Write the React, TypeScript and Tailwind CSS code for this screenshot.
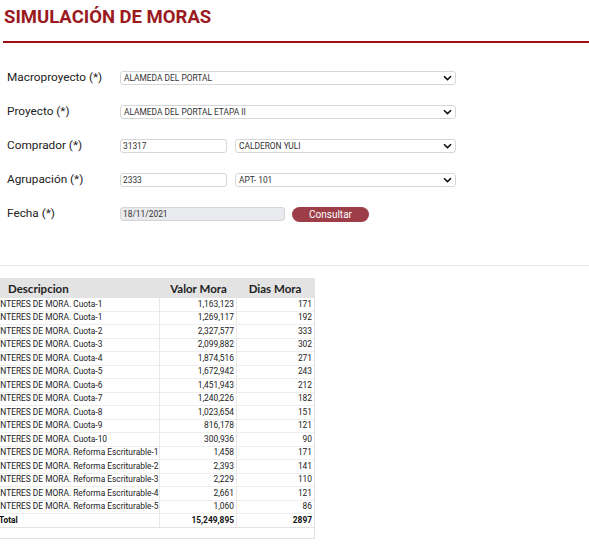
import React from "react";

const rows: [string, string, string][] = [
  ["INTERES DE MORA. Cuota-1", "1,163,123", "171"],
  ["INTERES DE MORA. Cuota-1", "1,269,117", "192"],
  ["INTERES DE MORA. Cuota-2", "2,327,577", "333"],
  ["INTERES DE MORA. Cuota-3", "2,099,882", "302"],
  ["INTERES DE MORA. Cuota-4", "1,874,516", "271"],
  ["INTERES DE MORA. Cuota-5", "1,672,942", "243"],
  ["INTERES DE MORA. Cuota-6", "1,451,943", "212"],
  ["INTERES DE MORA. Cuota-7", "1,240,226", "182"],
  ["INTERES DE MORA. Cuota-8", "1,023,654", "151"],
  ["INTERES DE MORA. Cuota-9", "816,178", "121"],
  ["INTERES DE MORA. Cuota-10", "300,936", "90"],
  ["INTERES DE MORA. Reforma Escriturable-1", "1,458", "171"],
  ["INTERES DE MORA. Reforma Escriturable-2", "2,393", "141"],
  ["INTERES DE MORA. Reforma Escriturable-3", "2,229", "110"],
  ["INTERES DE MORA. Reforma Escriturable-4", "2,661", "121"],
  ["INTERES DE MORA. Reforma Escriturable-5", "1,060", "86"],
];

function Chevron() {
  return (
    <svg width="9" height="6" viewBox="0 0 9 6" className="shrink-0">
      <path d="M1 1.2 L4.5 4.6 L8 1.2" fill="none" stroke="#111" strokeWidth="1.6" />
    </svg>
  );
}

function Select({ value, className }: { value: string; className: string }) {
  return (
    <div
      className={`flex h-[14px] items-center justify-between rounded-[3px] border border-[#d6d6d6] bg-white pl-[3px] pr-[3px] text-[8.4px] text-[#333] ${className}`}
    >
      <span>{value}</span>
      <Chevron />
    </div>
  );
}

function TextBox({ value, className }: { value: string; className: string }) {
  return (
    <div
      className={`flex h-[14px] items-center rounded-[3px] border border-[#d6d6d6] pl-[2px] text-[8.4px] text-[#333] ${className}`}
    >
      {value}
    </div>
  );
}

function FormRow({ label, children }: { label: string; children: React.ReactNode }) {
  return (
    <div className="flex h-[14px] items-center">
      <span className="w-[113px] shrink-0 text-[11.8px] text-[#222]">{label}</span>
      {children}
    </div>
  );
}

export default function App() {
  return (
    <div className="h-[558px] w-[589px] overflow-hidden bg-white font-['Roboto',sans-serif]">
      <h1 className="pl-[4px] pt-[6px] text-[18.5px] font-bold leading-[22px] text-[#9a1a1f]">
        SIMULACIÓN DE MORAS
      </h1>
      <div className="ml-[3px] mt-[13px] h-[2px] bg-[#9c0f12]" />

      <div className="mt-[28px] flex flex-col gap-[20px] px-[7px]">
        <FormRow label="Macroproyecto (*)">
          <Select value="ALAMEDA DEL PORTAL" className="w-[336px]" />
        </FormRow>
        <FormRow label="Proyecto (*)">
          <Select value="ALAMEDA DEL PORTAL ETAPA II" className="w-[336px]" />
        </FormRow>
        <FormRow label="Comprador (*)">
          <TextBox value="31317" className="w-[107px]" />
          <Select value="CALDERON YULI" className="ml-[8px] w-[221px]" />
        </FormRow>
        <FormRow label="Agrupación (*)">
          <TextBox value="2333" className="w-[107px]" />
          <Select value="APT- 101" className="ml-[8px] w-[221px]" />
        </FormRow>
        <FormRow label="Fecha (*)">
          <TextBox value="18/11/2021" className="w-[165px] bg-[#e9eaed]" />
          <button className="ml-[7px] h-[15px] w-[77px] rounded-full bg-[#9c3d48] text-[10px] leading-[15px] text-white">
            Consultar
          </button>
        </FormRow>
      </div>

      <div className="mt-[44px] h-px bg-[#e6e6e6]" />

      <div className="mt-[12px] h-[261px] w-[315px] overflow-hidden border border-l-0 border-[#e2e2e2]">
        <div className="flex h-[19px] items-center bg-[#e3e3e3] font-['Lato',sans-serif] text-[11.5px] font-bold text-[#222]">
          <span className="w-[160px] pl-[8px]">Descripcion</span>
          <span className="w-[77px] text-center">Valor Mora</span>
          <span className="w-[76px] text-center">Dias Mora</span>
        </div>
        {rows.map(([d, v, n], i) => (
          <div
            key={i}
            className="flex h-[13.5px] items-center border-b border-[#eeeeee] text-[8.4px] leading-[13px] text-[#222]"
          >
            <span className="-ml-[2px] w-[162px] overflow-hidden whitespace-nowrap border-r border-[#e8e8e8]">{d}</span>
            <span className="w-[77px] border-r border-[#e8e8e8] pr-[2px] text-right">{v}</span>
            <span className="w-[76px] pr-[1px] text-right">{n}</span>
          </div>
        ))}
        <div className="flex h-[14px] items-center border-b border-[#e2e2e2] text-[8.4px] font-bold leading-[13px] text-[#111]">
          <span className="-ml-[1px] w-[161px] border-r border-[#e8e8e8]">Total</span>
          <span className="w-[77px] border-r border-[#e8e8e8] pr-[2px] text-right">15,249,895</span>
          <span className="w-[76px] pr-[1px] text-right">2897</span>
        </div>
      </div>
    </div>
  );
}
